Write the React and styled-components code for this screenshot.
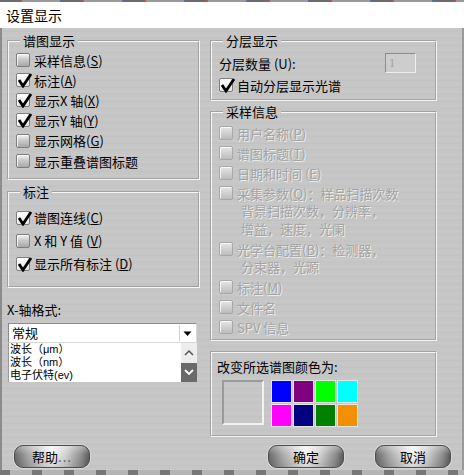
import React from "react";
import styled, { createGlobalStyle } from "styled-components";

const GlobalStyle = createGlobalStyle`
  html, body { margin: 0; padding: 0; background: #8a8a8a; }
  body {
    font-family: "Noto Sans CJK SC", "Noto Sans", sans-serif;
    font-size: 13px;
    color: #000;
  }
`;

const Page = styled.div`
  width: 464px;
  height: 475px;
  display: flex;
  flex-direction: column;
  overflow: hidden;
`;

const TopStrip = styled.div`
  height: 2px;
  background: repeating-linear-gradient(90deg, #6b6b6b 0 20px, #d24b4b 20px 22px, #9a9a9a 22px 60px, #4a6fc9 60px 62px);
`;

const TitleBar = styled.div`
  height: 26px;
  background: #fff;
  display: flex;
  align-items: center;
  padding-left: 6px;
  font-size: 14px;
`;

const Body = styled.div`
  flex: 1;
  display: flex;
  flex-direction: column;
  padding: 5px 0 0 5px;
  border-left: 2px solid #8c8c8c;
  border-right: 2px solid #9a9a9a;
  background-color: #c6c6c6;
  background-image:
    repeating-linear-gradient(180deg, rgba(255,255,255,0.05) 0 1px, transparent 1px 3px, rgba(0,0,0,0.018) 3px 4px, transparent 4px 7px);
`;

const BottomStrip = styled.div`
  height: 5px;
  background: repeating-linear-gradient(90deg, #777 0 10px, #b5b5b5 10px 32px);
`;

const Columns = styled.div`
  display: grid;
  grid-template-columns: 193px 227px;
  column-gap: 10px;
  align-items: start;
`;

const Column = styled.div`
  display: flex;
  flex-direction: column;
`;

const Group = styled.fieldset`
  margin: ${({ $top }) => $top || 0}px 0 0 0;
  padding: ${({ $pt }) => $pt || 0}px 0 ${({ $pb }) => $pb || 0}px 7px;
  border: 2px groove #f6f6f6;
  min-width: 0;
`;

const Legend = styled.legend`
  margin-left: 4px;
  padding: 0 3px;
  font-size: 13px;
  line-height: 15px;
`;

const Row = styled.div`
  display: flex;
  align-items: center;
  gap: 4px;
  height: ${({ $h }) => $h || 20}px;
  color: ${({ $disabled }) => ($disabled ? "#a4a4a4" : "#000")};
  text-shadow: ${({ $disabled }) => ($disabled ? "1px 1px 0 #ececec" : "none")};
  white-space: nowrap;
`;

const Continue = styled.div`
  padding-left: 22px;
  height: 18px;
  line-height: 18px;
  font-family: "Liberation Sans", "Noto Sans CJK SC", sans-serif;
  color: #a4a4a4;
  text-shadow: 1px 1px 0 #ececec;
  white-space: nowrap;
`;

const Box = styled.span`
  width: 14px;
  height: 14px;
  flex: none;
  box-sizing: border-box;
  border-radius: 2px;
  border: 1px solid ${({ $disabled }) => ($disabled ? "#a8a8a8" : "#7d7d7d")};
  background: ${({ $checked, $disabled }) =>
    $checked
      ? "linear-gradient(180deg, #ffffff, #e4e4e4)"
      : $disabled
      ? "linear-gradient(180deg, #e6e6e6, #bcbcbc)"
      : "linear-gradient(180deg, #f4f4f4 0%, #c9c9c9 45%, #a9a9a9 100%)"};
  box-shadow: inset 1px 1px 0 rgba(255,255,255,0.8);
  position: relative;
  overflow: visible;
`;

const CheckMark = styled.svg`
  position: absolute;
  left: 0;
  top: -2px;
`;

const Check = ({ checked, disabled }) => (
  <Box $checked={checked} $disabled={disabled}>
    {checked && (
      <CheckMark width="16" height="16" viewBox="0 0 16 16">
        <path d="M2 8 L6 14 L14 2" fill="none" stroke="#000" strokeWidth="2.8" strokeLinejoin="miter" />
      </CheckMark>
    )}
  </Box>
);

const Item = ({ checked, disabled, h, children }) => (
  <Row $h={h} $disabled={disabled}>
    <Check checked={checked} disabled={disabled} />
    <span>{children}</span>
  </Row>
);

const FieldLabel = styled.div`
  margin-top: 14px;
  line-height: 16px;
`;

const Combo = styled.div`
  margin: 5px 0 0 1px;
  width: 189px;
  height: 20px;
  box-sizing: border-box;
  background: #fff;
  border: 1px solid #8a8a8a;
  border-right-color: #d8d8d8;
  border-bottom-color: #d8d8d8;
  display: flex;
  align-items: center;
`;

const ComboText = styled.span`
  flex: 1;
  padding-left: 3px;
  line-height: 18px;
`;

const ComboArrow = styled.span`
  width: 15px;
  height: 16px;
  margin-right: 1px;
  display: flex;
  align-items: center;
  justify-content: center;
  border-left: 1px solid #d0d0d0;
`;

const List = styled.div`
  margin-left: 1px;
  width: 189px;
  height: 39px;
  box-sizing: border-box;
  background: #fff;
  border-left: 1px solid #9a9a9a;
  display: flex;
`;

const ListItems = styled.div`
  flex: 1;
  padding: 0 0 0 1px;
  font-family: "Liberation Sans", "Noto Sans CJK SC", sans-serif;
  font-size: 11px;
  line-height: 12.8px;
`;

const ScrollBar = styled.div`
  width: 16px;
  display: flex;
  flex-direction: column;
`;

const ScrollBtn = styled.div`
  flex: 1;
  display: flex;
  align-items: center;
  justify-content: center;
  background: ${({ $active }) => ($active ? "#6a6a6a" : "#ededed")};
`;

const NumRow = styled.div`
  display: flex;
  align-items: center;
  justify-content: space-between;
  height: 22px;
  margin: 4px 0 1px;
  padding-right: 19px;
`;

const NumInput = styled.div`
  width: 31px;
  height: 20px;
  box-sizing: border-box;
  border: 1px solid #8c8c8c;
  border-right-color: #eeeeee;
  border-bottom-color: #eeeeee;
  background: #cdcdcd;
  color: #a0a0a0;
  font-family: "Liberation Serif", serif;
  font-size: 12px;
  line-height: 18px;
  padding-left: 3px;
`;

const ColorPanel = styled.div`
  margin-top: 10px;
  border: 2px groove #f6f6f6;
  padding: 6px 0 8px 5px;
`;

const ColorLabel = styled.div`
  line-height: 16px;
`;

const ColorBody = styled.div`
  display: flex;
  align-items: flex-start;
  gap: 7px;
  margin-top: 5px;
  padding-left: 5px;
`;

const Preview = styled.div`
  width: 42px;
  height: 45px;
  box-sizing: border-box;
  border: 2px solid #9a9a9a;
  border-right-color: #f2f2f2;
  border-bottom-color: #f2f2f2;
`;

const Swatches = styled.div`
  display: grid;
  grid-template-columns: repeat(4, 21px);
  grid-auto-rows: 23px;
  gap: 1px;
`;

const Swatch = styled.div`
  border: 1px solid #e4e4e4;
  background: ${({ $c }) => $c};
`;

const Footer = styled.div`
  margin-top: auto;
  margin-bottom: 2px;
  display: flex;
  align-items: center;
  padding-left: 7px;
`;

const Button = styled.button`
  width: ${({ $w }) => $w || 76}px;
  height: 23px;
  margin-left: ${({ $ml }) => $ml || 0}px;
  border: 1px solid #4c4c4c;
  border-radius: 9px;
  background:
    linear-gradient(180deg, rgba(255,255,255,0.35) 0%, rgba(255,255,255,0) 40%, rgba(0,0,0,0.12) 100%),
    linear-gradient(90deg, #6c6c6c 0%, #a9a9a9 18%, #e2e2e2 40%, #f5f5f5 50%, #cfcfcf 70%, #8e8e8e 90%, #5e5e5e 100%);
  box-shadow: 0 0 0 1px #d6d6d6;
  font-family: "Noto Sans CJK SC", sans-serif;
  font-size: 13px;
  color: #000;
  padding: 0;
  line-height: 21px;
`;

const Dots = styled.span`
  color: #555;
  letter-spacing: 1px;
`;

const ChevronDown = ({ color }) => (
  <svg width="10" height="8" viewBox="0 0 10 8">
    <path d="M1 2 L5 6 L9 2" fill="none" stroke={color} strokeWidth="1.8" />
  </svg>
);

const ChevronUp = ({ color }) => (
  <svg width="10" height="8" viewBox="0 0 10 8">
    <path d="M1 6 L5 2 L9 6" fill="none" stroke={color} strokeWidth="1.5" />
  </svg>
);

const colors = ["#0000ff", "#800080", "#00ff00", "#00ffff", "#ff00ff", "#000080", "#008000", "#f39000"];

export default function App() {
  return (
    <Page>
      <GlobalStyle />
      <TopStrip />
      <TitleBar>设置显示</TitleBar>
      <Body>
        <Columns>
          <Column>
            <Group $pt={2} $pb={7}>
              <Legend>谱图显示</Legend>
              <Item>采样信息(<u>S</u>)</Item>
              <Item checked>标注(<u>A</u>)</Item>
              <Item checked>显示X 轴(<u>X</u>)</Item>
              <Item checked>显示Y 轴(<u>Y</u>)</Item>
              <Item h={21}>显示网格(<u>G</u>)</Item>
              <Item>显示重叠谱图标题</Item>
            </Group>
            <Group $top={4} $pt={7} $pb={11}>
              <Legend>标注</Legend>
              <Item h={23} checked>谱图连线(<u>C</u>)</Item>
              <Item h={23}>X 和 Y 值 (<u>V</u>)</Item>
              <Item h={23} checked>显示所有标注 (<u>D</u>)</Item>
            </Group>
            <FieldLabel>X-轴格式:</FieldLabel>
            <Combo>
              <ComboText>常规</ComboText>
              <ComboArrow>
                <svg width="9" height="7" viewBox="0 0 9 7">
                  <path d="M0.5 1.5 L8.5 1.5 L4.5 6 Z" fill="#000" />
                </svg>
              </ComboArrow>
            </Combo>
            <List>
              <ListItems>
                <div>波长（μm）</div>
                <div>波长（nm）</div>
                <div>电子伏特(ev)</div>
              </ListItems>
              <ScrollBar>
                <ScrollBtn>
                  <ChevronUp color="#555" />
                </ScrollBtn>
                <ScrollBtn $active>
                  <ChevronDown color="#fff" />
                </ScrollBtn>
              </ScrollBar>
            </List>
          </Column>
          <Column>
            <Group $pb={4}>
              <Legend>分层显示</Legend>
              <NumRow>
                <span>分层数量 (U):</span>
                <NumInput>1</NumInput>
              </NumRow>
              <Item checked>自动分层显示光谱</Item>
            </Group>
            <Group $top={3} $pt={4} $pb={2}>
              <Legend>采样信息</Legend>
              <Item disabled>用户名称(<u>P</u>)</Item>
              <Item disabled>谱图标题(<u>T</u>)</Item>
              <Item disabled>日期和时间 (<u>E</u>)</Item>
              <Item disabled>采集参数(<u>Q</u>)：样品扫描次数</Item>
              <Continue>背景扫描次数，分辨率，</Continue>
              <Continue>增益，速度，光阑</Continue>
              <Item disabled>光学台配置(<u>B</u>)：检测器，</Item>
              <Continue>分束器，光源</Continue>
              <Item disabled>标注(<u>M</u>)</Item>
              <Item disabled>文件名</Item>
              <Item disabled>SPV 信息</Item>
            </Group>
            <ColorPanel>
              <ColorLabel>改变所选谱图颜色为:</ColorLabel>
              <ColorBody>
                <Preview />
                <Swatches>
                  {colors.map((c) => (
                    <Swatch key={c} $c={c} />
                  ))}
                </Swatches>
              </ColorBody>
            </ColorPanel>
          </Column>
        </Columns>
        <Footer>
          <Button>
            帮助<Dots>...</Dots>
          </Button>
          <Button $ml={178}>确定</Button>
          <Button $ml={31}>取消</Button>
        </Footer>
      </Body>
      <BottomStrip />
    </Page>
  );
}
